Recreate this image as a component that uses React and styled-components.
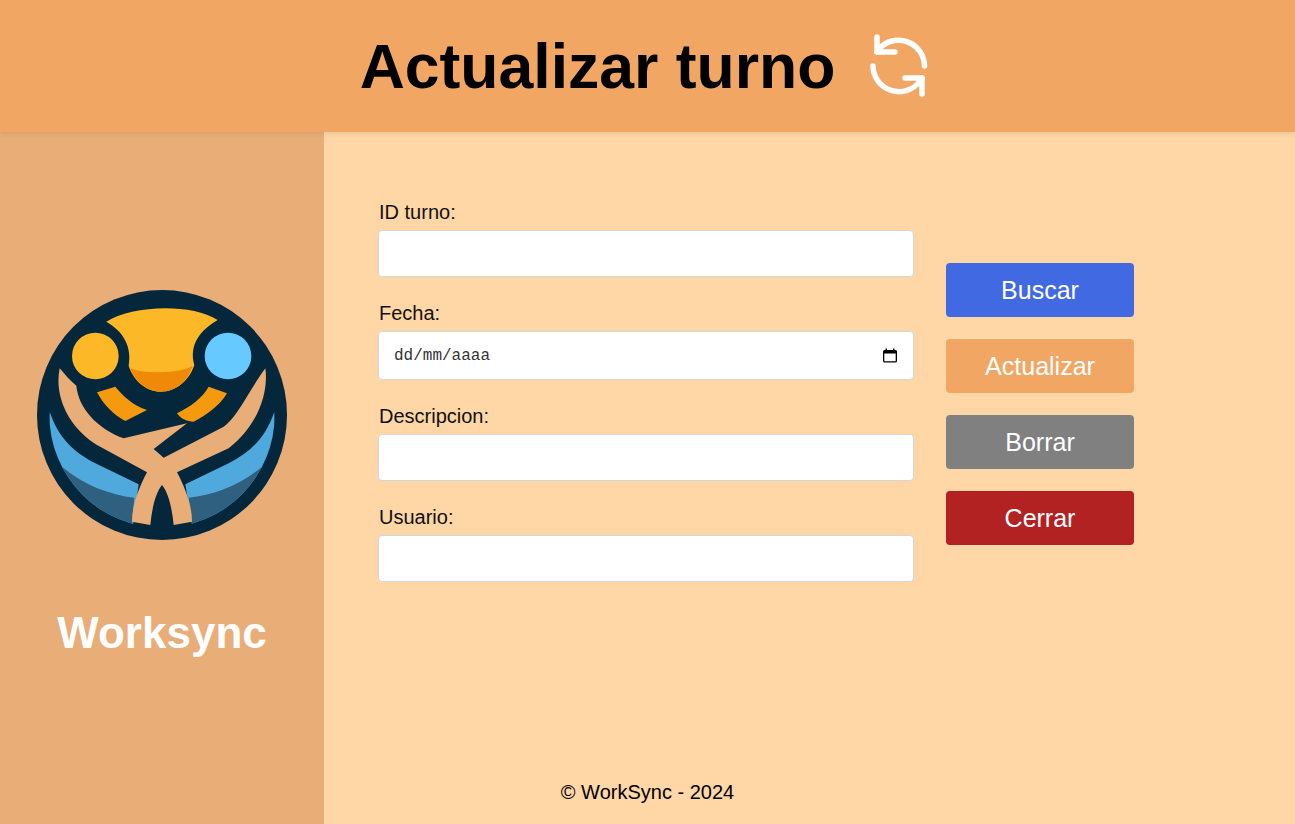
import React from 'react'
import styled, {createGlobalStyle} from 'styled-components'

const Global = createGlobalStyle`
  html, body { margin: 0; padding: 0; }
  body { font-family: "Liberation Sans", Arial, sans-serif; background: #FFD6A6; color: #000; overflow: hidden; }
`

const Page = styled.div`
  display: flex;
  flex-direction: column;
  height: 824px;
`

const Header = styled.header`
  position: relative;
  z-index: 2;
  flex: 0 0 132px;
  display: flex;
  align-items: center;
  justify-content: center;
  gap: 29px;
  padding-right: 1px;
  background: #F2A663;
  box-shadow: 0 2px 5px rgba(0, 0, 0, .08);
`

const Title = styled.h1`
  margin: 0;
  font-size: 62.5px;
  font-weight: 700;
  line-height: 1;
`

const Body = styled.div`
  flex: 1;
  display: flex;
  min-height: 0;
`

const Sidebar = styled.aside`
  flex: 0 0 324px;
  display: flex;
  flex-direction: column;
  align-items: center;
  padding-top: 158px;
  box-sizing: border-box;
  background: #E9AD78;
  box-shadow: 2px 0 4px rgba(255, 255, 255, .12);
`

const Brand = styled.h2`
  margin: 65px 0 0;
  font-size: 44px;
  font-weight: 700;
  line-height: 56px;
  color: #fff;
`

const Main = styled.main`
  flex: 1;
  display: flex;
  flex-direction: column;
  background: #FFD6A6;
`

const Content = styled.div`
  flex: 1;
  display: flex;
  align-items: flex-start;
  gap: 32px;
  padding: 69px 0 0 54px;
`

const Form = styled.form`
  width: 536px;
  display: flex;
  flex-direction: column;
  gap: 25px;
`

const Field = styled.div`
  display: flex;
  flex-direction: column;
  gap: 6px;
`

const Label = styled.label`
  padding-left: 1px;
  font-size: 20px;
  line-height: 23px;
  color: #111;
`

const Input = styled.input`
  box-sizing: border-box;
  width: 100%;
  height: 47px;
  padding: 0 15px;
  background: #fff;
  border: 1px solid #d6d6d6;
  border-radius: 4px;
  font-family: "Liberation Mono", monospace;
  font-size: 16px;
  color: #000;
`

const DateWrap = styled.div`
  position: relative;
  height: 49px;
`

const DateInput = styled(Input)`
  height: 49px;
  &::placeholder {
    color: #333;
    opacity: 1;
  }
`

const DateIcon = styled.svg`
  position: absolute;
  top: 17px;
  right: 17px;
`

const Actions = styled.div`
  display: flex;
  flex-direction: column;
  gap: 22px;
  margin-top: 62px;
`

const Button = styled.button`
  width: 188px;
  height: 54px;
  border: 0;
  border-radius: 4px;
  background: ${({color}) => color};
  color: #fff;
  font-family: "Liberation Sans", Arial, sans-serif;
  font-size: 25px;
`

const Footer = styled.footer`
  flex: 0 0 64px;
  padding-right: 324px;
  text-align: center;
  font-size: 20px;
  line-height: 64px;
`

const RefreshIcon = () => (
  <svg width="70" height="70" viewBox="0 0 70 70" fill="none" stroke="#fff" strokeWidth="5.5" strokeLinecap="round" strokeLinejoin="round">
    <path d="M60.5 35A26 26 0 0 0 15 18L13 21" />
    <path d="M13 6V21H31" />
    <path d="M9 35A26 26 0 0 0 56 50L58 47" />
    <path d="M41 47H58V63" />
  </svg>
)

const Logo = () => (
  <svg width="250" height="250" viewBox="50 45 750 750">
    <defs>
      <clipPath id="inner"><circle cx="425" cy="420" r="338" /></clipPath>
    </defs>
    <circle cx="425" cy="420" r="375" fill="#04273B" />
    <g clipPath="url(#inner)">
      <path d="M88,410 C115,490 160,530 225,565 L355,628 L338,750 L180,720 L80,560 Z" fill="#4FA9DC" />
      <path d="M125,575 C190,630 270,660 342,668 L335,750 C240,740 170,680 125,575 Z" fill="#2F6080" />
      <path d="M762,410 C735,490 690,530 625,565 L495,628 L515,750 L670,720 L770,560 Z" fill="#4FA9DC" />
      <path d="M725,575 C660,630 580,660 505,668 L515,750 C610,740 680,680 725,575 Z" fill="#2F6080" />
    </g>
    <path
      d="M118,280 C135,300 150,318 168,332 C175,400 230,460 310,490 L500,445 L400,522 L430,548 L610,455 C650,430 690,340 735,280 C745,350 715,450 625,520 L470,592 C495,640 515,690 515,740 L460,750 C455,700 445,655 425,630 C405,655 395,700 390,750 L335,740 C335,690 355,640 380,592 L230,510 C150,460 100,370 118,280 Z"
      fill="#E9AD78"
    />
    <path d="M258,140 C330,92 510,82 592,135 C540,165 505,210 522,270 C505,320 465,350 422,350 C380,350 340,320 325,272 C335,215 310,170 258,140 Z" fill="#FDB827" />
    <path d="M330,280 C370,297 470,297 516,274 C500,325 462,350 422,350 C382,350 345,322 330,280 Z" fill="#F08A06" />
    <circle cx="225" cy="243" r="70" fill="#FDB827" />
    <circle cx="623" cy="243" r="70" fill="#66C9FF" />
    <path d="M230,352 L285,335 C310,365 340,392 380,405 L315,438 C280,420 250,390 230,352 Z" fill="#F59A0E" />
    <path d="M565,335 L620,355 C600,390 560,420 520,440 C500,440 482,432 470,415 C510,395 545,370 565,335 Z" fill="#F59A0E" />
  </svg>
)

const App = () => (
  <Page>
    <Global />
    <Header>
      <Title>Actualizar turno</Title>
      <RefreshIcon />
    </Header>
    <Body>
      <Sidebar>
        <Logo />
        <Brand>Worksync</Brand>
      </Sidebar>
      <Main>
        <Content>
          <Form>
            <Field>
              <Label>ID turno:</Label>
              <Input type="text" />
            </Field>
            <Field>
              <Label>Fecha:</Label>
              <DateWrap>
                <DateInput type="text" placeholder="dd/mm/aaaa" />
                <DateIcon width="14" height="15" viewBox="0 0 14 15">
                  <path d="M2.500 0.500h1.500v1.500h6V0.500h1.500v1.500h1A1.500 1.500 0 0 1 14 3.500v9.500a1.500 1.500 0 0 1-1.500 1.500h-11A1.500 1.500 0 0 1 0 13v-9.500A1.500 1.500 0 0 1 1.500 2h1V0.500zM1.300 5.500v7.700h11.400V5.500H1.300z" fill="#000" />
                </DateIcon>
              </DateWrap>
            </Field>
            <Field>
              <Label>Descripcion:</Label>
              <Input type="text" />
            </Field>
            <Field>
              <Label>Usuario:</Label>
              <Input type="text" />
            </Field>
          </Form>
          <Actions>
            <Button type="button" color="#4169E1">Buscar</Button>
            <Button type="button" color="#F2A663">Actualizar</Button>
            <Button type="button" color="#808080">Borrar</Button>
            <Button type="button" color="#B22222">Cerrar</Button>
          </Actions>
        </Content>
        <Footer>© WorkSync - 2024</Footer>
      </Main>
    </Body>
  </Page>
)

export default App
